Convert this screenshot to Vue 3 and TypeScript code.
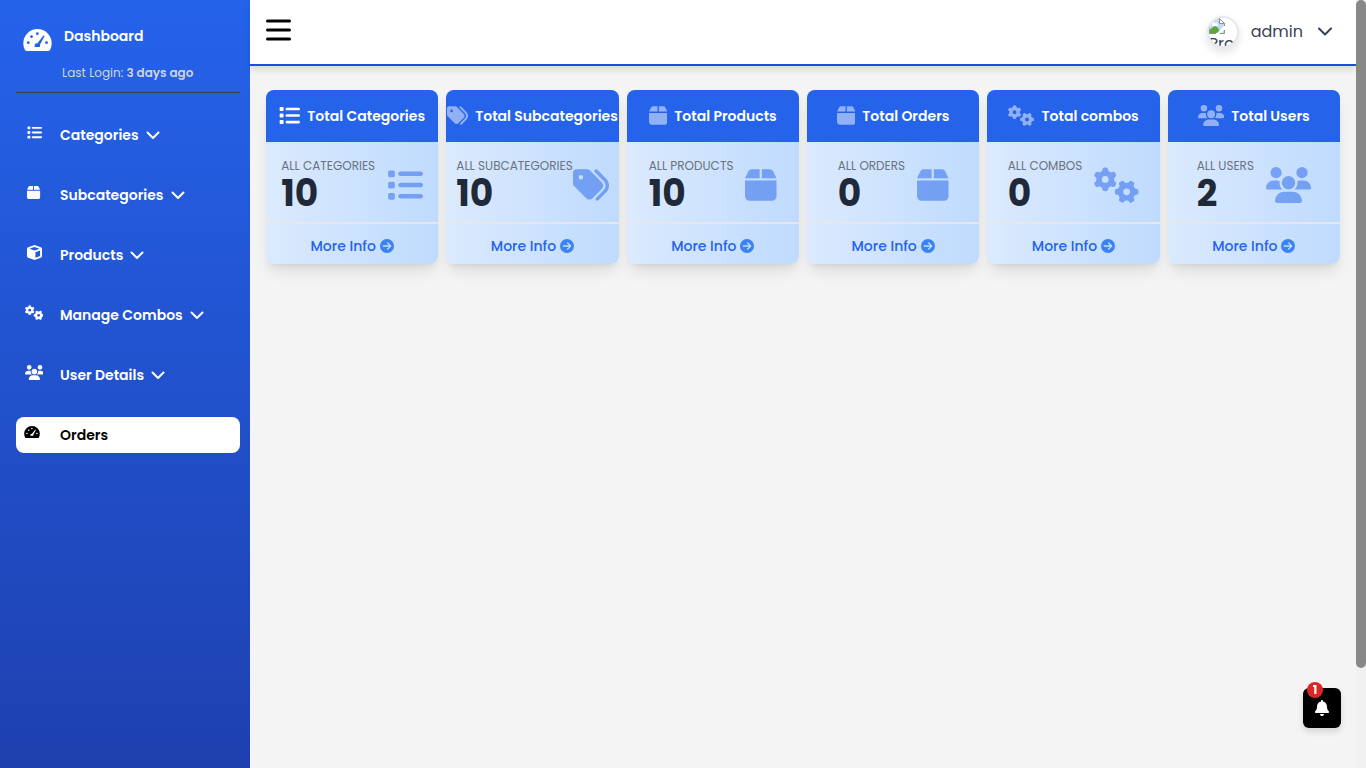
<script setup lang="ts">
type IconName = 'list' | 'tags' | 'box' | 'cube' | 'gears' | 'users' | 'gauge' | 'arrow' | 'bell'

const icons: Record<IconName, { box: string; path: string }> = {
  list: {
    box: '0 0 512 512',
    path: 'M40 48C26.7 48 16 58.7 16 72v48c0 13.3 10.7 24 24 24H88c13.3 0 24-10.7 24-24V72c0-13.3-10.7-24-24-24H40zM192 64c-17.7 0-32 14.3-32 32s14.3 32 32 32H480c17.7 0 32-14.3 32-32s-14.3-32-32-32H192zm0 160c-17.7 0-32 14.3-32 32s14.3 32 32 32H480c17.7 0 32-14.3 32-32s-14.3-32-32-32H192zm0 160c-17.7 0-32 14.3-32 32s14.3 32 32 32H480c17.7 0 32-14.3 32-32s-14.3-32-32-32H192zM16 232v48c0 13.3 10.7 24 24 24H88c13.3 0 24-10.7 24-24V232c0-13.3-10.7-24-24-24H40c-13.3 0-24 10.7-24 24zM40 368c-13.3 0-24 10.7-24 24v48c0 13.3 10.7 24 24 24H88c13.3 0 24-10.7 24-24V392c0-13.3-10.7-24-24-24H40z',
  },
  tags: {
    box: '0 0 512 512',
    path: 'M345 39.1L472.8 168.4c52.4 53 52.4 138.2 0 191.2L360.8 472.9c-9.3 9.4-24.5 9.5-33.9 .2s-9.5-24.5-.2-33.9L438.6 325.9c33.9-34.3 33.9-89.4 0-123.7L310.9 72.9c-9.3-9.4-9.2-24.6 .2-33.9s24.6-9.2 33.9 .2zM0 229.5V80C0 53.5 21.5 32 48 32H197.5c17 0 33.3 6.7 45.3 18.7l168 168c25 25 25 65.5 0 90.5L277.3 442.7c-25 25-65.5 25-90.5 0l-168-168C6.7 262.7 0 246.5 0 229.5zM144 144a32 32 0 1 0 -64 0 32 32 0 1 0 64 0z',
  },
  box: {
    box: '0 0 448 512',
    path: 'M50.7 58.5L0 160H208V32H93.7C75.5 32 58.9 42.3 50.7 58.5zM240 160H448L397.3 58.5C389.1 42.3 372.5 32 354.3 32H240V160zm208 32H0V416c0 35.3 28.7 64 64 64H384c35.3 0 64-28.7 64-64V192z',
  },
  cube: {
    box: '0 0 512 512',
    path: 'M234.5 5.7c13.9-5 29.1-5 43.1 0l192 68.6C495 83.4 512 107.5 512 134.6V377.4c0 27-17 51.2-42.5 60.3l-192 68.6c-13.9 5-29.1 5-43.1 0l-192-68.6C17 428.6 0 404.5 0 377.4V134.6c0-27 17-51.2 42.5-60.3l192-68.6zM256 66L82.3 128 256 190l173.7-62L256 66zm32 368.6l160-57.1v-188L288 246.6v188z',
  },
  gears: {
    box: '0 0 640 512',
    path: 'M308.5 135.3c7.1-6.3 9.9-16.2 6.2-25c-2.3-5.3-4.8-10.5-7.6-15.5L304 89.4c-3-5-6.3-9.9-9.8-14.6c-5.7-7.6-15.7-10.1-24.7-7.1l-28.2 9.3c-10.7-8.8-23-16-36.2-20.9L199 27.1c-1.9-9.3-9.1-16.7-18.5-17.8C173.9 8.4 167.2 8 160.4 8h-.7c-6.8 0-13.5 .4-20.1 1.2c-9.4 1.1-16.6 8.6-18.5 17.8L115 56.1c-13.3 5-25.5 12.1-36.2 20.9L50.5 67.8c-9-3-19-.5-24.7 7.1c-3.5 4.7-6.8 9.6-9.9 14.6l-3 5.3c-2.8 5-5.3 10.2-7.6 15.6c-3.7 8.7-.9 18.6 6.2 25l22.2 19.8C32.6 161.9 32 168.9 32 176s.6 14.1 1.7 20.9L11.5 216.7c-7.1 6.3-9.9 16.2-6.2 25c2.3 5.3 4.8 10.5 7.6 15.6l3 5.2c3 5.1 6.3 9.9 9.9 14.6c5.7 7.6 15.7 10.1 24.7 7.1l28.2-9.3c10.7 8.8 23 16 36.2 20.9l6.1 29.1c1.9 9.3 9.1 16.7 18.5 17.8c6.7 .8 13.5 1.2 20.4 1.2s13.7-.4 20.4-1.2c9.4-1.1 16.6-8.6 18.5-17.8l6.1-29.1c13.3-5 25.5-12.1 36.2-20.9l28.2 9.3c9 3 19 .5 24.7-7.1c3.5-4.7 6.8-9.5 9.8-14.6l3.1-5.4c2.8-5 5.3-10.2 7.6-15.5c3.7-8.7 .9-18.6-6.2-25l-22.2-19.8c1.1-6.8 1.7-13.8 1.7-20.9s-.6-14.1-1.7-20.9l22.2-19.8zM112 176a48 48 0 1 1 96 0 48 48 0 1 1 -96 0zM504.7 500.5c6.3 7.1 16.2 9.9 25 6.2c5.3-2.3 10.5-4.8 15.5-7.6l5.4-3.1c5-3 9.9-6.3 14.6-9.8c7.6-5.7 10.1-15.7 7.1-24.7l-9.3-28.2c8.8-10.7 16-23 20.9-36.2l29.1-6.1c9.3-1.9 16.7-9.1 17.8-18.5c.8-6.7 1.2-13.5 1.2-20.4s-.4-13.7-1.2-20.4c-1.1-9.4-8.6-16.6-17.8-18.5L583.9 307c-5-13.3-12.1-25.5-20.9-36.2l9.3-28.2c3-9 .5-19-7.1-24.7c-4.7-3.5-9.6-6.8-14.6-9.9l-5.3-3c-5-2.8-10.2-5.3-15.6-7.6c-8.7-3.7-18.6-.9-25 6.2l-19.8 22.2c-6.8-1.1-13.8-1.7-20.9-1.7s-14.1 .6-20.9 1.7l-19.8-22.2c-6.3-7.1-16.2-9.9-25-6.2c-5.3 2.3-10.5 4.8-15.6 7.6l-5.2 3c-5.1 3-9.9 6.3-14.6 9.9c-7.6 5.7-10.1 15.7-7.1 24.7l9.3 28.2c-8.8 10.7-16 23-20.9 36.2L315.1 313c-9.3 1.9-16.7 9.1-17.8 18.5c-.8 6.7-1.2 13.5-1.2 20.4s.4 13.7 1.2 20.4c1.1 9.4 8.6 16.6 17.8 18.5l29.1 6.1c5 13.3 12.1 25.5 20.9 36.2l-9.3 28.2c-3 9-.5 19 7.1 24.7c4.7 3.5 9.5 6.8 14.6 9.8l5.4 3.1c5 2.8 10.2 5.3 15.5 7.6c8.7 3.7 18.6 .9 25-6.2l19.8-22.2c6.8 1.1 13.8 1.7 20.9 1.7s14.1-.6 20.9-1.7l19.8 22.2zM464 304a48 48 0 1 1 0 96 48 48 0 1 1 0-96z',
  },
  users: {
    box: '0 0 640 512',
    path: 'M144 0a80 80 0 1 1 0 160A80 80 0 1 1 144 0zM512 0a80 80 0 1 1 0 160A80 80 0 1 1 512 0zM0 298.7C0 239.8 47.8 192 106.7 192h42.7c15.9 0 31 3.5 44.6 9.7c-1.3 7.2-1.9 14.7-1.9 22.3c0 38.2 16.8 72.5 43.3 96c-.2 0-.4 0-.7 0H21.3C9.6 320 0 310.4 0 298.7zM405.3 320c-.2 0-.4 0-.7 0c26.6-23.5 43.3-57.8 43.3-96c0-7.6-.7-15-1.9-22.3c13.6-6.3 28.7-9.7 44.6-9.7h42.7C592.2 192 640 239.8 640 298.7c0 11.8-9.6 21.3-21.3 21.3H405.3zM224 224a96 96 0 1 1 192 0 96 96 0 1 1 -192 0zM128 485.3C128 411.7 187.7 352 261.3 352H378.7C452.3 352 512 411.7 512 485.3c0 14.7-11.9 26.7-26.7 26.7H154.7c-14.7 0-26.7-11.9-26.7-26.7z',
  },
  gauge: {
    box: '0 4 29 24',
    path: 'M14.5 5A14.2 14.2 0 0 0 .3 19.2c0 2.6.7 5 1.9 7 .3.5.8.8 1.4.8h21.8c.6 0 1.1-.3 1.4-.8 1.2-2 1.9-4.4 1.9-7A14.2 14.2 0 0 0 14.5 5zM5.3 17.3a1.4 1.4 0 1 1 0 2.8a1.4 1.4 0 1 1 0-2.8zM8.5 11.3a1.4 1.4 0 1 1 0 2.8a1.4 1.4 0 1 1 0-2.8zM14.3 8.3a1.4 1.4 0 1 1 0 2.8a1.4 1.4 0 1 1 0-2.8zM23.5 17.3a1.4 1.4 0 1 1 0 2.8a1.4 1.4 0 1 1 0-2.8zM20.2 11.7c.5-.6 1.6 0 1.2.9L16.9 20.8c.3.7.3 1.5-.1 2.2h-5c-.9-2.1.5-3.9 2.7-3.7z',
  },
  arrow: {
    box: '0 0 512 512',
    path: 'M0 256a256 256 0 1 0 512 0A256 256 0 1 0 0 256zM297 385c-9.4 9.4-24.6 9.4-33.9 0s-9.4-24.6 0-33.9l71-71L120 280c-13.3 0-24-10.7-24-24s10.7-24 24-24l214.1 0-71-71c-9.4-9.4-9.4-24.6 0-33.9s24.6-9.4 33.9 0L409 239c9.4 9.4 9.4 24.6 0 33.9L297 385z',
  },
  bell: {
    box: '0 0 448 512',
    path: 'M224 0c-17.7 0-32 14.3-32 32V51.2C119 66 64 130.6 64 208v18.8c0 47-17.3 92.4-48.5 127.6l-7.4 8.3c-8.4 9.4-10.4 22.9-5.3 34.4S19.4 416 32 416H416c12.6 0 24-7.4 29.2-18.9s3.1-25-5.3-34.4l-7.4-8.3C401.3 319.2 384 273.9 384 226.8V208c0-77.4-55-142-128-156.8V32c0-17.7-14.3-32-32-32zm45.3 493.3c12-12 18.7-28.3 18.7-45.3H224 160c0 17 6.7 33.3 18.7 45.3s28.3 18.7 45.3 18.7s33.3-6.7 45.3-18.7z',
  },
}

const menu: { label: string; icon: IconName }[] = [
  { label: 'Categories', icon: 'list' },
  { label: 'Subcategories', icon: 'box' },
  { label: 'Products', icon: 'cube' },
  { label: 'Manage Combos', icon: 'gears' },
  { label: 'User Details', icon: 'users' },
]

const cards: { title: string; label: string; value: number; icon: IconName; solid?: boolean }[] = [
  { title: 'Total Categories', label: 'ALL CATEGORIES', value: 10, icon: 'list', solid: true },
  { title: 'Total Subcategories', label: 'ALL SUBCATEGORIES', value: 10, icon: 'tags' },
  { title: 'Total Products', label: 'ALL PRODUCTS', value: 10, icon: 'box' },
  { title: 'Total Orders', label: 'ALL ORDERS', value: 0, icon: 'box' },
  { title: 'Total combos', label: 'ALL COMBOS', value: 0, icon: 'gears' },
  { title: 'Total Users', label: 'ALL USERS', value: 2, icon: 'users' },
]
</script>

<template>
  <div class="shell">
    <aside class="sidebar">
      <a href="#" class="brand">
        <svg class="brand-icon" :viewBox="icons.gauge.box"><path fill-rule="evenodd" :d="icons.gauge.path" /></svg>
        <span>Dashboard</span>
      </a>
      <p class="login">Last Login: <b>3 days ago</b></p>
      <nav class="menu">
        <button v-for="item in menu" :key="item.label" type="button" class="menu-item">
          <span class="menu-icon"><svg :viewBox="icons[item.icon].box"><path :d="icons[item.icon].path" /></svg></span>
          <span>{{ item.label }}</span>
          <svg class="chevron" viewBox="0 0 14 9"><path d="M1.5 1.5 7 7l5.5-5.5" /></svg>
        </button>
        <a href="#" class="menu-item active">
          <span class="menu-icon"><svg :viewBox="icons.gauge.box"><path fill-rule="evenodd" :d="icons.gauge.path" /></svg></span>
          <span>Orders</span>
        </a>
      </nav>
    </aside>

    <div class="main">
      <header class="topbar">
        <button type="button" class="burger" aria-label="Toggle menu">
          <svg viewBox="0 0 25 22"><path d="M1.5 2h22M1.5 11h22M1.5 20h22" /></svg>
        </button>
        <button type="button" class="account">
          <span class="avatar">
            <svg viewBox="0 0 16 16">
              <path d="M1 1h10l4 4v10H1z" fill="#fff" />
              <path d="M1 1h9v5h5v9H1z" fill="#c3d9f8" />
              <path d="M3 6a2 2 0 0 1 3.5-1A1.500 1.500 0 0 1 8 8H4a1.300 1.300 0 0 1-1-2z" fill="#fff" />
              <path d="M1 15v-3c3-4 6-5 8-2l3 5z" fill="#58a83c" />
              <path d="M7 16 16 7v4l-5 5z" fill="#fff" />
              <path d="M.5 15.5V.5h10l5 5V8M10.5.5v5h5M15.5 12v3.500H11M.5 15.500H7" fill="none" stroke="#8d8d8d" />
            </svg>
            <span>Profile</span>
          </span>
          <span class="account-name">admin</span>
          <svg class="chevron" viewBox="0 0 14 9"><path d="M1 1.500 7 7.500l6-6" /></svg>
        </button>
      </header>

      <main class="cards">
        <article v-for="card in cards" :key="card.title" class="card">
          <h2 class="card-head">
            <svg :class="{ solid: card.solid }" :viewBox="icons[card.icon].box"><path :d="icons[card.icon].path" /></svg>
            <span>{{ card.title }}</span>
          </h2>
          <div class="card-body">
            <div class="stat">
              <p>{{ card.label }}</p>
              <strong>{{ card.value }}</strong>
            </div>
            <svg :viewBox="icons[card.icon].box"><path :d="icons[card.icon].path" /></svg>
          </div>
          <a href="#" class="card-more">
            More Info
            <svg :viewBox="icons.arrow.box"><path :d="icons.arrow.path" /></svg>
          </a>
        </article>
      </main>
    </div>

    <div class="scrollbar"><div class="thumb"></div></div>

    <button type="button" class="bell" aria-label="Notifications">
      <svg :viewBox="icons.bell.box"><path :d="icons.bell.path" /></svg>
      <span class="badge">1</span>
    </button>
  </div>
</template>

<style>
body {
  background: #f4f4f4;
}
</style>

<style scoped>
* {
  box-sizing: border-box;
  margin: 0;
}

.shell {
  display: flex;
  min-height: 100vh;
  font-family: Poppins, Inter, 'Open Sans', sans-serif;
  font-size: 14px;
  line-height: 20px;
}

button {
  border: 0;
  background: none;
  font: inherit;
  color: inherit;
  cursor: pointer;
}

a {
  text-decoration: none;
  color: inherit;
}

svg {
  display: block;
  flex: none;
  fill: currentColor;
}

.chevron {
  width: 14px;
  height: 9px;
  fill: none;
  stroke: currentColor;
  stroke-width: 2;
  stroke-linecap: round;
  stroke-linejoin: round;
}

.sidebar {
  flex: none;
  width: 250px;
  padding: 24px 10px 24px 16px;
  color: #fff;
  background: linear-gradient(#2563eb, #1e40af);
}

.brand {
  display: flex;
  align-items: flex-start;
  gap: 12px;
  height: 32px;
  padding-left: 7px;
  line-height: 24px;
  font-weight: 600;
}

.brand-icon {
  width: 29px;
  height: 24px;
  margin-top: 4px;
}

.login {
  padding: 7px 0 9px 46px;
  border-bottom: 1px solid #374151;
  font-size: 12px;
  color: #d1d5db;
}

.login b {
  font-weight: 600;
}

.menu {
  display: flex;
  flex-direction: column;
  gap: 24px;
  padding-top: 24px;
}

.menu-item {
  display: flex;
  align-items: center;
  gap: 7px;
  height: 36px;
  padding: 0 8px;
  border-radius: 8px;
  font-weight: 600;
}

.menu-icon {
  display: flex;
  justify-content: center;
  width: 20px;
  margin-right: 9px;
  padding-bottom: 6px;
}

.menu-icon svg {
  height: 15px;
}

.active {
  color: #000;
  background: #fff;
}

.active .menu-icon {
  justify-content: flex-start;
}

.active .menu-icon svg {
  width: 16px;
  height: 14px;
}

.main {
  flex: 1;
  min-width: 0;
}

.topbar {
  display: flex;
  align-items: center;
  justify-content: space-between;
  height: 66px;
  padding: 0 24px 0 16px;
  border-bottom: 2px solid #1d4ed8;
  background: #fff;
  box-shadow: 0 4px 6px rgb(0 0 0 / 10%);
}

.burger {
  padding: 0 0 4px;
}

.burger svg {
  width: 25px;
  height: 22px;
  stroke: #000;
  stroke-width: 3;
  stroke-linecap: round;
}

.account {
  display: flex;
  align-items: center;
  gap: 12px;
  padding: 0;
  font-size: 16px;
  color: #374151;
}

.account-name {
  padding-right: 3px;
}

.account .chevron {
  margin-bottom: 2px;
}

.avatar {
  width: 32px;
  height: 32px;
  overflow: hidden;
  border: 2px solid #e5e7eb;
  border-radius: 50%;
  line-height: 20px;
  text-align: left;
  box-shadow: 0 4px 8px rgb(0 0 0 / 12%);
}

.avatar svg {
  width: 16px;
  height: 16px;
}

.cards {
  display: grid;
  grid-template-columns: repeat(6, minmax(0, 1fr));
  gap: 8px;
  padding: 24px 16px;
}

.card {
  overflow: hidden;
  border-radius: 8px;
  background: linear-gradient(to right, #dbeafe, #bfdbfe);
  box-shadow:
    0 10px 15px -3px rgb(0 0 0 / 10%),
    0 4px 6px -4px rgb(0 0 0 / 10%);
}

.card-head {
  display: flex;
  align-items: center;
  justify-content: center;
  gap: 7px;
  height: 52px;
  padding-bottom: 1px;
  font-size: 14px;
  font-weight: 600;
  white-space: nowrap;
  color: #fff;
  background: #2563eb;
}

.card-head svg {
  height: 21px;
  opacity: 0.5;
}

.card-head .solid {
  opacity: 1;
}

.card-body {
  display: flex;
  align-items: center;
  justify-content: center;
  height: 82px;
  padding: 6px 10px 0;
  border-bottom: 2px solid #e5e7eb;
}

.stat {
  min-width: 0;
  padding-right: 12px;
}

.stat p {
  font-size: 12px;
  line-height: 18px;
  white-space: nowrap;
  color: #6b7280;
}

.stat strong {
  display: block;
  font-size: 36px;
  line-height: 38px;
  font-weight: 700;
  color: #1f2937;
}

.card-body svg {
  height: 36px;
  color: #2563eb;
  opacity: 0.5;
}

.card-more {
  display: flex;
  align-items: center;
  justify-content: center;
  gap: 4px;
  height: 40px;
  padding-top: 4px;
  font-weight: 500;
  color: #2563eb;
}

.card-more svg {
  width: 14px;
  height: 14px;
  color: #3b82f6;
}

.scrollbar {
  flex: none;
  width: 10px;
  background: #f1f1f1;
}

.thumb {
  height: 87vh;
  border-radius: 5px;
  background: #888;
}

.bell {
  position: fixed;
  right: 25px;
  bottom: 40px;
  display: grid;
  place-items: center;
  width: 38px;
  height: 40px;
  padding: 0;
  border-radius: 6px;
  color: #fff;
  background: #000;
  box-shadow: 0 4px 6px rgb(0 0 0 / 12%);
}

.bell svg {
  height: 16px;
}

.badge {
  position: absolute;
  top: -6px;
  left: 4px;
  width: 16px;
  height: 16px;
  border-radius: 50%;
  font-size: 12px;
  line-height: 16px;
  font-weight: 700;
  background: #dc2626;
}
</style>
